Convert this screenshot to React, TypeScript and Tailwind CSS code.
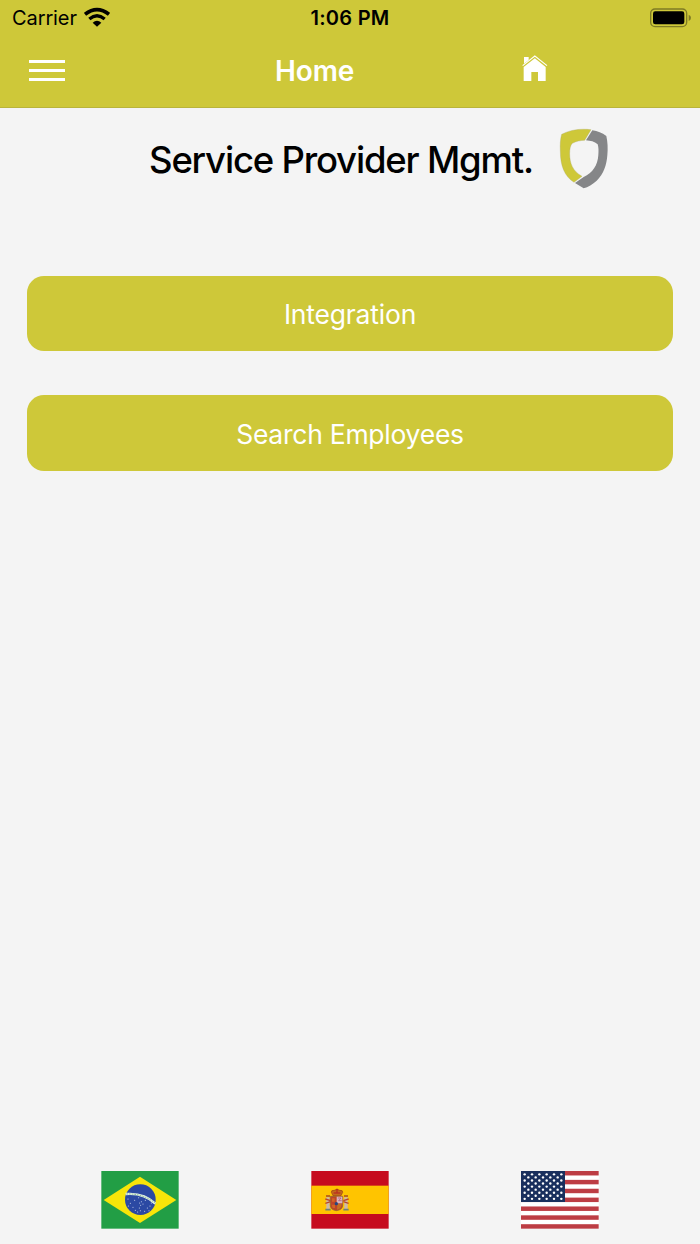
import React from 'react';

const StatusBar = () => (
  <div className="flex h-9 items-center text-black">
    <div className="flex flex-1 items-center pl-3">
      <span className="w-[65px] text-[20px] leading-none tracking-[-0.1px]">Carrier</span>
      <svg className="mb-0.5 ml-[7px] h-5 w-[26px]" viewBox="0 0 78 60" fill="none" stroke="#000">
        <path d="M3 22 Q39 -6 75 22" strokeWidth="11" />
        <path d="M16 36 Q39 17 62 36" strokeWidth="10" />
        <path d="M26 47 Q39 36 52 47 L39 59 Z" fill="#000" stroke="none" />
      </svg>
    </div>
    <span className="-ml-1 text-[20px] leading-none font-semibold tracking-[0.25px]">1:06 PM</span>
    <div className="flex flex-1 justify-end pr-2">
      <svg className="h-5 w-[42px]" viewBox="0 0 126 60">
        <rect x="2" y="3" width="108" height="53" rx="13" fill="none" stroke="#7f7b24" strokeWidth="4" />
        <rect x="9" y="10" width="94" height="39" rx="7" fill="#000" />
        <path d="M116 20 Q123 23 123 29.5 Q123 36 116 39 Z" fill="#7f7b24" />
      </svg>
    </div>
  </div>
);

const NavBar = () => (
  <div className="flex h-[69px] items-center pl-[29px]">
    <div className="flex w-9 flex-col gap-1.5">
      <div className="h-[3px] bg-white" />
      <div className="h-[3px] bg-white" />
      <div className="h-[3px] bg-white" />
    </div>
    <h1 className="ml-[210px] w-[84px] text-[28px] leading-none font-semibold tracking-[-0.1px] whitespace-nowrap text-white">Home</h1>
    <svg className="mb-1 ml-[163px] h-[27px] w-[26px]" viewBox="67 165 78 81" fill="none">
      <path d="M73 171 H87 V180 L73 191 Z" fill="#fff" />
      <path d="M69 197 L105.500 168 L142 197" stroke="#fff" strokeWidth="3.500" />
      <path d="M72 201 L105.500 175 L138 201 V243 H115 V216 H95 V243 H72 Z" fill="#fff" />
    </svg>
  </div>
);

const ShieldLogo = () => (
  <svg className="h-[61px] w-[50px]" viewBox="42 39 150 183">
    <path
      d="M138 44 L119 76 C106 76 93 79 82 85 C76 91 74 102 74 116 C74 145 83 168 111 184 L87 202 C58 184 46 151 46 109 C45 88 46 73 50 58 C74 45 106 40 138 44 Z"
      fill="#cec839"
      stroke="#a9a660"
      strokeWidth="1"
    />
    <path
      d="M142 46 C158 48 171 54 184 63 C188 80 189 101 187 121 C185 150 176 177 155 197 C143 208 129 216 116 220 L90 204 L116 186 C143 174 158 151 160 120 C161 108 161 98 158 88 C148 80 137 77 123 76 Z"
      fill="#858688"
    />
  </svg>
);

const MenuButton = ({ label, className }: { label: string; className: string }) => (
  <button className="flex h-[75.500px] w-full items-center justify-center rounded-[17px] bg-[#cec839] pt-[2.500px] text-white">
    <span className={className}>{label}</span>
  </button>
);

const brazilStars = [
  [81, 84], [88, 97], [82, 105], [96, 109], [101, 88], [113, 80], [116, 96], [121, 92],
  [126, 99], [119, 103], [115, 111], [103, 118], [110, 123], [118, 119], [131, 121],
  [139, 111], [147, 105], [133, 88], [144, 119], [151, 96],
];

const BrazilFlag = () => (
  <svg className="h-[58px] w-[78px]" viewBox="0 0 234 174">
    <rect x="1" width="232" height="173" fill="#229e45" />
    <path d="M8 87 L117 17 L226 87 L117 156 Z" fill="#f8e509" />
    <circle cx="118" cy="86" r="46" fill="#2b49a3" />
    <path d="M74 69 C110 66 143 78 163 98" fill="none" stroke="#e4efe4" strokeWidth="7" />
    <path d="M76 69 C110 67 142 79 162 96" fill="none" stroke="#79b98d" strokeWidth="2.500" strokeDasharray="5 3" />
    {brazilStars.map(([x, y]) => (
      <circle key={`${x}-${y}`} cx={x} cy={y} r="1.600" fill="#d5dcf0" />
    ))}
  </svg>
);

const SpainFlag = () => (
  <svg className="h-[58px] w-[78px]" viewBox="0 0 234 174">
    <rect x="1" width="232" height="173" fill="#c60b1e" />
    <rect x="1" y="44" width="232" height="85" fill="#ffc400" />
    {/* pillars */}
    <path d="M46 79 H56 V114 H46 Z M100 79 H110 V114 H100 Z" fill="#ccb9aa" />
    <path d="M43 84 L59 89 M43 97 L59 92 M97 89 L113 84 M97 92 L113 97" stroke="#b9472c" strokeWidth="4" />
    <path d="M45 75 H57 M99 75 H111" stroke="#a94a20" strokeWidth="5" />
    <path d="M43 116 H59 M97 116 H113" stroke="#6f8177" strokeWidth="5" />
    {/* crown */}
    <path d="M61 64 Q60 57 70 58 Q78 52 86 58 Q96 57 95 64 L90 74 H66 Z" fill="#c46a1b" stroke="#9b3e17" strokeWidth="2" />
    <path d="M78 53 V65 M68 66 H88" stroke="#b51d24" strokeWidth="3" />
    {/* coat of arms */}
    <path d="M58 76 H95 V105 Q93 117 76 119 Q60 117 58 105 Z" fill="#bd4528" stroke="#8b6234" strokeWidth="2" />
    <path d="M77 77 H94 V97 H77 Z" fill="#d9b4bd" />
    <path d="M81 81 H90 L83 89 H92" fill="none" stroke="#b04b6d" strokeWidth="2" />
    <path d="M63 82 H71 V92 H63 Z M62 101 H72 V111 H65 Z" fill="#d46424" />
    <path d="M79 99 H92 Q92 113 78 116 Z" fill="#c66f21" />
    <circle cx="76" cy="98" r="5" fill="#26467f" />
  </svg>
);

const UsaFlag = () => (
  <svg className="h-[58px] w-[78px]" viewBox="0 0 234 174">
    <rect width="233" height="173" fill="#fff" />
    {[0, 1, 2, 3, 4, 5, 6].map((i) => (
      <rect key={i} y={i * 26.6} width="233" height="13.400" fill="#bd3d44" />
    ))}
    <rect width="132" height="93" fill="#192f5d" />
    {Array.from({ length: 9 }).map((_, row) =>
      Array.from({ length: row % 2 ? 5 : 6 }).map((_, col) => (
        <circle key={`${row}-${col}`} cx={11 + (row % 2 ? 11 : 0) + col * 22} cy={10 + row * 9.2} r="3.600" fill="#fff" />
      ))
    )}
  </svg>
);

export default function App() {
  return (
    <div className="flex h-[1244px] w-[700px] flex-col overflow-hidden bg-[#f4f4f4] font-['Inter',sans-serif]">
      <header className="h-[108px] shrink-0 border-b border-[#b9b43b] bg-[#cec839]">
        <StatusBar />
        <NavBar />
      </header>

      <main className="flex flex-1 flex-col">
        <div className="flex h-[101px] items-center pl-[149px]">
          <h2 className="w-[410px] pt-1 text-[36.500px] leading-none font-medium tracking-[-1.200px] whitespace-nowrap text-black">
            Service Provider Mgmt.
          </h2>
          <ShieldLogo />
        </div>

        <div className="mt-[66.500px] flex flex-col gap-11 px-[27px]">
          <MenuButton label="Integration" className="text-[26.500px] leading-none tracking-[-0.200px]" />
          <MenuButton label="Search Employees" className="text-[26.500px] leading-none tracking-[-0.260px]" />
        </div>
      </main>

      <footer className="flex px-[35px] pb-[15px]">
        <button className="flex flex-1 justify-center" aria-label="Português"><BrazilFlag /></button>
        <button className="flex flex-1 justify-center" aria-label="Español"><SpainFlag /></button>
        <button className="flex flex-1 justify-center" aria-label="English"><UsaFlag /></button>
      </footer>
    </div>
  );
}
